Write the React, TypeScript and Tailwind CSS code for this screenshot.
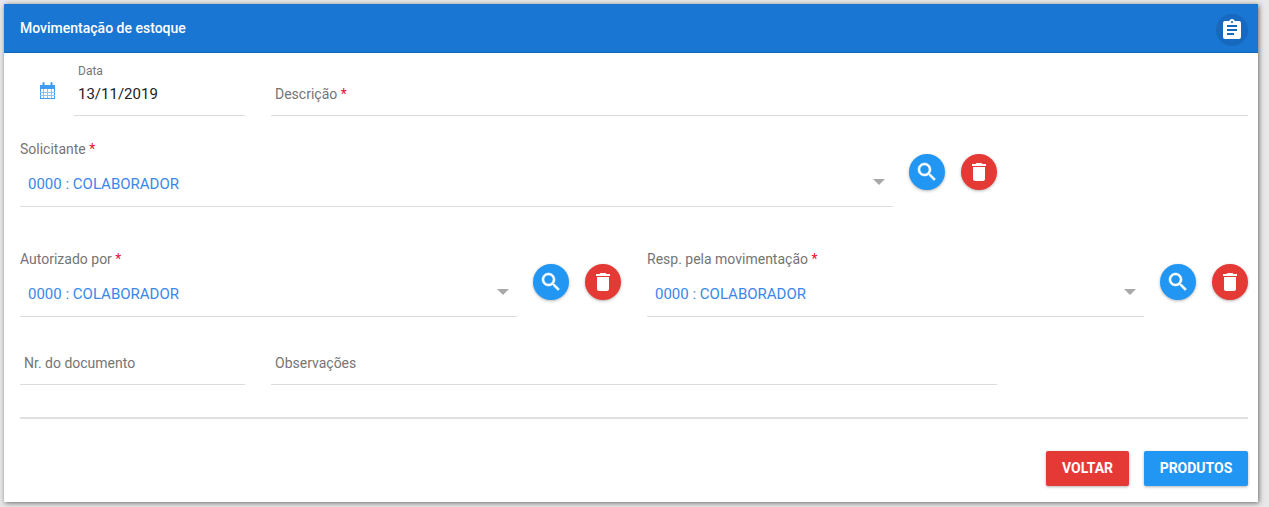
import React from "react";

const font = { fontFamily: "Roboto, sans-serif" };

function Search() {
  return (
    <svg viewBox="0 0 24 24" className="w-6 h-6" fill="#fff" stroke="#fff" strokeWidth="0.5">
      <path d="M15.5 14h-.79l-.28-.27C15.41 12.59 16 11.11 16 9.5 16 5.91 13.09 3 9.5 3S3 5.91 3 9.5 5.91 16 9.5 16c1.61 0 3.09-.59 4.23-1.57l.27.28v.79l5 4.99L20.49 19l-4.99-5zm-6 0C7.01 14 5 11.99 5 9.5S7.01 5 9.5 5 14 7.01 14 9.5 11.99 14 9.5 14z" />
    </svg>
  );
}

function Trash() {
  return (
    <svg viewBox="0 0 24 24" className="w-6 h-6" fill="#fff">
      <path d="M6 19c0 1.1.9 2 2 2h8c1.1 0 2-.9 2-2V7H6v12zM19 4h-3.5l-1-1h-5l-1 1H5v2h14V4z" />
    </svg>
  );
}

function Actions() {
  return (
    <div className="flex gap-4 shrink-0 ml-4 mt-[13px]">
      <button className="w-9 h-9 rounded-full bg-[#2196f3] flex items-center justify-center shadow-[0_1px_3px_rgba(0,0,0,0.3)]">
        <Search />
      </button>
      <button className="w-9 h-9 rounded-full bg-[#e53935] flex items-center justify-center shadow-[0_1px_3px_rgba(0,0,0,0.3)]">
        <Trash />
      </button>
    </div>
  );
}

function Select({ label, className }: { label: string; className: string }) {
  return (
    <div className={`${className} h-[66px] border-b border-[#dcdcdc] relative`}>
      <div className="text-[14px] leading-[16px] text-[#757575]">
        {label} <span className="text-[#f01030]">*</span>
      </div>
      <div className="text-[15px] leading-[20px] text-[#3a87ea] pl-2 mt-[17px]">0000 : COLABORADOR</div>
      <span className="absolute right-[8px] top-[38px] w-0 h-0 border-x-[6px] border-x-transparent border-t-[6px] border-t-[#a8a8a8]" />
    </div>
  );
}

export default function App() {
  return (
    <div className="h-[507px] w-[1269px] bg-[#e8e8e8] overflow-hidden pt-1 pl-1" style={font}>
      <div className="w-[1254px] h-[498px] bg-white shadow-[1px_1px_5px_rgba(0,0,0,0.55)]">
        <header className="h-[49px] bg-[#1976d2] flex items-center justify-between pl-4 pr-[10px] border-b border-[#1565b8]">
          <h1 className="text-[14px] font-medium text-white">Movimentação de estoque</h1>
          <div className="w-8 h-8 mt-1 rounded-full bg-[#1669be] flex items-center justify-center">
            <svg viewBox="0 0 24 24" className="w-6 h-6" fill="#fff">
              <path d="M19 3h-4.18C14.4 1.84 13.3 1 12 1c-1.3 0-2.4.84-2.82 2H5c-1.1 0-2 .9-2 2v14c0 1.1.9 2 2 2h14c1.1 0 2-.9 2-2V5c0-1.1-.9-2-2-2zm-7 0c.55 0 1 .45 1 1s-.45 1-1 1-1-.45-1-1 .45-1 1-1zm2 14H7v-2h7v2zm3-4H7v-2h10v2zm0-4H7V7h10v2z" />
            </svg>
          </div>
        </header>

        <div className="pl-4 pr-[10px]">
          <div className="flex h-[63px]">
            <div className="w-[54px] shrink-0 pl-[20px] pt-[29px]">
              <svg width="15" height="17" viewBox="0 0 15 17" fill="none">
                <rect x="0.5" y="3.5" width="14" height="13" stroke="#3f9cf5" />
                <rect x="0" y="4" width="15" height="3" fill="#3f9cf5" />
                <path d="M3.5 1v4M11.5 1v4" stroke="#3f9cf5" strokeWidth="2" strokeLinecap="round" />
                <path d="M0 10.5h15M0 13.5h15M3.5 7v9M7.5 7v9M11.5 7v9" stroke="#8cc4f8" strokeWidth="1" />
              </svg>
            </div>
            <div className="w-[171px] shrink-0 border-b border-[#dcdcdc] pl-1 pt-[11px]">
              <div className="text-[12px] leading-[14px] text-[#757575]">Data</div>
              <div className="text-[15px] leading-[20px] text-[#212121] mt-[6px]">13/11/2019</div>
            </div>
            <div className="ml-[26px] flex-1 border-b border-[#dcdcdc] pl-1 pt-[32px] text-[14px] leading-[18px] text-[#757575]">
              Descrição <span className="text-[#f01030]">*</span>
            </div>
          </div>

          <div className="flex mt-[25px]">
            <Select label="Solicitante" className="w-[873px]" />
            <Actions />
          </div>

          <div className="flex mt-[44px]">
            <Select label="Autorizado por" className="w-[497px]" />
            <Actions />
            <Select label="Resp. pela movimentação" className="w-[497px] ml-[26px]" />
            <Actions />
          </div>

          <div className="flex mt-[22px]">
            <div className="w-[225px] h-[46px] border-b border-[#dcdcdc] pl-1 pt-[15px] text-[14px] leading-[18px] text-[#757575]">Nr. do documento</div>
            <div className="w-[726px] ml-[26px] h-[46px] border-b border-[#dcdcdc] pl-1 pt-[15px] text-[14px] leading-[18px] text-[#757575]">Observações</div>
          </div>

          <div className="h-[2px] bg-[#e0e0e0] mt-8" />

          <div className="flex justify-end gap-[15px] mt-[32px]">
            <button className="w-[83px] h-[35px] rounded-[2px] bg-[#e53935] text-white text-[14px] font-bold shadow-[0_1px_3px_rgba(0,0,0,0.3)]">VOLTAR</button>
            <button className="w-[104px] h-[35px] rounded-[2px] bg-[#2196f3] text-white text-[14px] font-bold shadow-[0_1px_3px_rgba(0,0,0,0.3)]">PRODUTOS</button>
          </div>
        </div>
      </div>
    </div>
  );
}
